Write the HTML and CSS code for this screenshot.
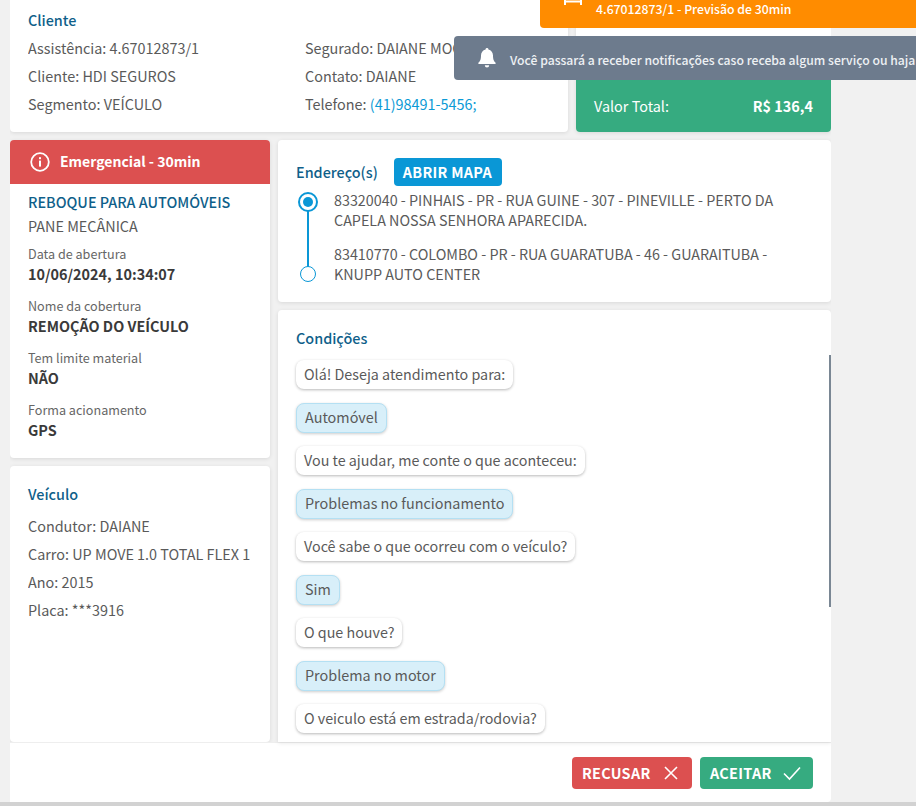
FILE: index.html
```html
<!DOCTYPE html>
<html lang="pt-BR">
<head>
<meta charset="utf-8">
<title>Serviço</title>
<link rel="stylesheet" href="styles.css">
</head>
<body>
<div class="page">
  <div class="sheet">
    <div class="top-row">
      <section class="card client">
        <h2 class="title">Cliente</h2>
        <div class="client-grid">
          <p class="line">Assistência: 4.67012873/1</p>
          <p class="line">Segurado: DAIANE MOCELIN</p>
          <p class="line">Cliente: HDI SEGUROS</p>
          <p class="line">Contato: DAIANE</p>
          <p class="line">Segmento: VEÍCULO</p>
          <p class="line">Telefone: <a class="phone">(41)98491-5456;</a></p>
        </div>
      </section>
      <aside class="side">
        <div class="side-fill"></div>
        <div class="total"><span>Valor Total:</span><strong>R$ 136,4</strong></div>
      </aside>
    </div>
    <div class="body-row">
      <div class="left">
        <section class="card service">
          <div class="alert">
            <svg class="alert-icon" viewBox="0 0 20 20" width="20" height="20"><circle cx="10" cy="10" r="8.8" fill="none" stroke="#fff" stroke-width="1.8"/><rect x="9" y="8.6" width="2" height="6" fill="#fff"/><rect x="9" y="5.2" width="2" height="2" fill="#fff"/></svg>
            <span class="alert-text">Emergencial - 30min</span>
          </div>
          <div class="service-body">
            <h3 class="service-name">REBOQUE PARA AUTOMÓVEIS</h3>
            <p class="service-sub">PANE MECÂNICA</p>
            <dl class="facts">
              <div class="fact"><dt>Data de abertura</dt><dd>10/06/2024, 10:34:07</dd></div>
              <div class="fact"><dt>Nome da cobertura</dt><dd>REMOÇÃO DO VEÍCULO</dd></div>
              <div class="fact"><dt>Tem limite material</dt><dd>NÃO</dd></div>
              <div class="fact"><dt>Forma acionamento</dt><dd>GPS</dd></div>
            </dl>
          </div>
        </section>
        <section class="card vehicle">
          <h2 class="title">Veículo</h2>
          <p class="line">Condutor: DAIANE</p>
          <p class="line">Carro: UP MOVE 1.0 TOTAL FLEX 1</p>
          <p class="line">Ano: 2015</p>
          <p class="line">Placa: ***3916</p>
        </section>
      </div>
      <div class="right">
        <section class="card address">
          <div class="address-head">
            <h2 class="title">Endereço(s)</h2>
            <button class="map-btn">ABRIR MAPA</button>
          </div>
          <div class="stops">
            <div class="stop first">
              <span class="dot on"></span>
              <p>83320040 - PINHAIS - PR - RUA GUINE - 307 - PINEVILLE - PERTO DA CAPELA NOSSA SENHORA APARECIDA.</p>
            </div>
            <div class="stop last">
              <span class="dot"></span>
              <p>83410770 - COLOMBO - PR - RUA GUARATUBA - 46 - GUARAITUBA - KNUPP AUTO CENTER</p>
            </div>
          </div>
        </section>
        <section class="card conditions">
          <h2 class="title">Condições</h2>
          <div class="chat">
            <div class="bubble">Olá! Deseja atendimento para:</div>
            <div class="bubble me">Automóvel</div>
            <div class="bubble">Vou te ajudar, me conte o que aconteceu:</div>
            <div class="bubble me">Problemas no funcionamento</div>
            <div class="bubble">Você sabe o que ocorreu com o veículo?</div>
            <div class="bubble me">Sim</div>
            <div class="bubble">O que houve?</div>
            <div class="bubble me">Problema no motor</div>
            <div class="bubble">O veiculo está em estrada/rodovia?</div>
          </div>
          <div class="thumb"></div>
        </section>
      </div>
    </div>
    <footer class="actions">
      <button class="act refuse">RECUSAR
        <svg viewBox="0 0 16 16" width="16" height="16"><path d="M2 2l12 12M14 2L2 14" stroke="#fff" stroke-width="1.6" fill="none"/></svg>
      </button>
      <button class="act accept">ACEITAR
        <svg viewBox="0 0 20 16" width="20" height="16"><path d="M2 8.5l5.5 5.5L18 2.5" stroke="#fff" stroke-width="1.6" fill="none"/></svg>
      </button>
    </footer>
  </div>
  <div class="toast-orange">
    <svg class="bed" viewBox="0 0 20 10" width="20" height="10"><path d="M2 0v9M18 0v9M2 5.500h16" stroke="#fff" stroke-width="2" fill="none"/></svg>
    <span>4.67012873/1 - Previsão de 30min</span>
  </div>
  <div class="toast-gray">
    <svg viewBox="0 0 18 20" width="18" height="20"><path d="M9 0a1.4 1.4 0 0 1 1.4 1.5C13.3 2.2 15 4.6 15 7.500c0 4.500 1.200 5.800 2.600 7.300.4.5.1 1.200-.6 1.200H1c-.7 0-1-.7-.6-1.200C1.800 13.300 3 12 3 7.500 3 4.600 4.700 2.200 7.600 1.500A1.400 1.400 0 0 1 9 0zM6.800 17.200h4.400a2.200 2.200 0 0 1-4.400 0z" fill="#fff"/></svg>
    <span class="toast-text">Você passará a receber notificações caso receba algum serviço ou haja</span>
  </div>
</div>
</body>
</html>
```

FILE: styles.css
```css
* { box-sizing: border-box; }
html, body { margin: 0; padding: 0; height: 100%; overflow: hidden; }
body { background: #f1f1f1; font-family: "Noto Sans CJK SC", "Noto Sans", sans-serif; font-size: 14.4px; color: #5a5a5a; }
p, h2, h3, dl, dd, dt { margin: 0; font-weight: 400; }
.page { position: relative; width: 916px; height: 806px; overflow: hidden; border-bottom: 4px solid #d2d2d2; }
.sheet { position: relative; width: 821px; height: 802px; margin-left: 10px; display: flex; flex-direction: column; overflow: hidden; }
.card { background: #fff; border-radius: 4px; box-shadow: 0 1px 4px rgba(0, 0, 0, .1); }
.top-row { display: flex; gap: 8px; height: 132px; flex: none; }
.title { font-size: 14.4px; line-height: 20px; color: #0f5f8a; font-weight: 500; }
.line { line-height: 28px; white-space: nowrap; overflow: hidden; }
.client { width: 558px; padding: 10px 18px 0; border-radius: 0 0 4px 4px; }
.client-grid { display: grid; grid-template-columns: 277px 245px; margin-top: 4px; }
.phone { color: #0b9ad6; }
.side { width: 255px; display: flex; flex-direction: column; background: #fff; border-radius: 0 0 4px 4px; box-shadow: 0 1px 4px rgba(0, 0, 0, .1); }
.side-fill { flex: 1; }
.total { height: 52px; padding: 0 18px 2px; display: flex; justify-content: space-between; align-items: center; background: #36ab80; color: #fff; border-radius: 0 0 4px 4px; }
.total strong { font-weight: 700; }
.body-row { display: flex; gap: 8px; margin-top: 8px; flex: 1; min-height: 0; }
.left { width: 260px; display: flex; flex-direction: column; gap: 8px; flex: none; }
.alert { height: 44px; background: #dc5050; border-radius: 4px 4px 0 0; color: #fff; font-weight: 700; display: flex; align-items: center; gap: 10px; padding-left: 20px; }
.alert-text { font-size: 14px; margin-bottom: 2px; }
.service { height: 318px; flex: none; }
.service-body { padding: 7px 18px 0; }
.service-name { font-size: 14.4px; line-height: 22px; color: #0f5f8a; font-weight: 500; }
.service-sub { line-height: 26px; }
.facts { margin-top: 5px; display: flex; flex-direction: column; gap: 12px; }
.fact dt { font-size: 12.6px; line-height: 20px; color: #666; }
.fact dd { font-weight: 700; line-height: 20px; color: #3a3a3a; }
.vehicle { flex: 1; padding: 18px 18px 0; }
.vehicle .title { margin-bottom: 8px; }
.right { flex: 1; min-width: 0; display: flex; flex-direction: column; gap: 8px; }
.address { height: 162px; flex: none; padding: 18px 18px 0; }
.address-head { display: flex; align-items: center; gap: 16px; }
.map-btn { border: 0; height: 28px; padding: 0 10px 2px 9px; border-radius: 4px; background: #0a97d6; color: #fff; letter-spacing: .3px; font: 700 14.4px "Noto Sans CJK SC", "Noto Sans", sans-serif; }
.stops { margin-top: 4px; }
.stop { display: flex; position: relative; padding-left: 38px; }
.stop p { line-height: 20px; font-size: 14.33px; }
.first { padding-bottom: 14px; }
.dot { position: absolute; width: 16px; height: 16px; left: 4px; top: 22px; border-radius: 50%; border: 1.5px solid #0a97d6; background: #fff; z-index: 1; }
.dot.on { left: 2px; top: 2px; width: 20px; height: 20px; border-width: 2px; }
.dot.on::after { content: ""; position: absolute; left: 3px; top: 3px; width: 10px; height: 10px; border-radius: 50%; background: #0a97d6; }
.first::after { content: ""; position: absolute; left: 11px; top: 21px; bottom: -23px; width: 2px; background: #0a97d6; }
.conditions { position: relative; flex: 1; padding: 18px 18px 0; overflow: hidden; border-radius: 4px 4px 0 0; }
.chat { display: flex; flex-direction: column; align-items: flex-start; gap: 14px; margin-top: 12px; }
.bubble { height: 29px; padding: 0 8px; font-size: 14.3px; line-height: 27px; background: #fff; border-radius: 8px; box-shadow: 0 1px 3px rgba(0, 0, 0, .28); white-space: nowrap; }
.bubble.me { background: #d8eff9; border: 1px solid #b4e0f3; line-height: 25px; padding: 0 8px; height: 30px; font-size: 14.4px; box-shadow: 0 1px 3px rgba(0, 0, 0, .2); margin-bottom: -1px; }
.thumb { position: absolute; right: 0; top: 45px; width: 2px; height: 252px; background: #7a8794; }
.actions { flex: none; height: 60px; background: #fff; border-top: 1px solid #eee; border-radius: 0 0 4px 0; display: flex; justify-content: flex-end; align-items: flex-start; gap: 8px; padding: 14px 18px 0 0; }
.act { height: 32px; border: 0; border-radius: 4px; color: #fff; letter-spacing: .3px; font: 700 14.4px "Noto Sans CJK SC", "Noto Sans", sans-serif; display: flex; align-items: center; padding: 0 10px 2px; }
.act svg { margin-top: 2px; }
.refuse { background: #dc5050; gap: 12px; width: 120px; }
.accept { background: #36ab80; gap: 10px; width: 113px; }
.toast-orange { position: absolute; left: 540px; top: 0; width: 376px; height: 28px; background: #ff8c00; border-radius: 0 0 0 4px; color: #fff; font-size: 12.25px; font-weight: 500; padding-left: 56px; line-height: 18px; }
.toast-orange span { display: block; }
.bed { position: absolute; left: 23px; top: -4px; }
.toast-gray { position: absolute; left: 454px; top: 36px; width: 462px; height: 44px; background: #6d7b8d; border-radius: 4px 0 0 4px; color: #eef1f4; display: flex; align-items: center; gap: 14px; padding-left: 24px; font-size: 12.2px; font-weight: 500; white-space: nowrap; overflow: hidden; }
.toast-gray svg { flex: none; }
.toast-text { margin-top: 3px; }
```
